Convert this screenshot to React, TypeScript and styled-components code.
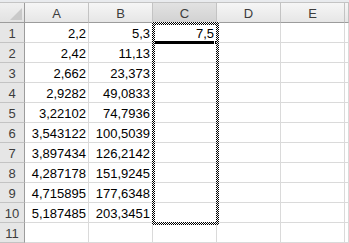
import React from "react";
import styled, { createGlobalStyle } from "styled-components";

const Global = createGlobalStyle`
  html, body { margin: 0; padding: 0; background: #ffffff; }
  body { font-family: "Liberation Sans", Arial, sans-serif; }
`;

const Page = styled.div`
  width: 349px;
  height: 243px;
  overflow: hidden;
  display: flex;
  flex-direction: column;
  background: #ffffff;
`;

const TopStrip = styled.div`
  height: 2px;
  background: #e9ebee;
  border-bottom: 1px solid #c4c4c4;
  flex: none;
`;

const Sheet = styled.div`
  position: relative;
  display: grid;
  grid-template-columns: 25px repeat(5, 64px) 1fr;
  grid-auto-rows: 20px;
  font-size: 13px;
`;

const Corner = styled.div`
  box-sizing: border-box;
  border-right: 1px solid #9c9c9c;
  border-bottom: 1px solid #9c9c9c;
  background: linear-gradient(#f0f0f0, #e2e2e2);
  position: relative;
  &::after {
    content: "";
    position: absolute;
    right: 2px;
    bottom: 2px;
    width: 0;
    height: 0;
    border-left: 12px solid transparent;
    border-bottom: 12px solid #c9c9c9;
  }
`;

const ColHead = styled.div<{ $sel?: boolean }>`
  box-sizing: border-box;
  border-right: 1px solid #c3c3c3;
  border-bottom: 1px solid #9c9c9c;
  background: ${(p) =>
    p.$sel
      ? "linear-gradient(#e2e2e2, #d2d2d2)"
      : "linear-gradient(#f6f6f6, #e6e6e6)"};
  color: #3c3c3c;
  display: flex;
  align-items: center;
  justify-content: center;
  padding-top: 1px;
`;

const RowHead = styled.div`
  box-sizing: border-box;
  border-right: 1px solid #9c9c9c;
  border-bottom: 1px solid #c3c3c3;
  background: #e6e6e6;
  color: #3c3c3c;
  display: flex;
  align-items: center;
  justify-content: center;
  padding-top: 1px;
`;

const Cell = styled.div<{ $active?: boolean }>`
  box-sizing: border-box;
  border-right: 1px solid #dadada;
  border-bottom: 1px solid #dadada;
  background: #ffffff;
  color: #000;
  display: flex;
  align-items: center;
  justify-content: flex-end;
  padding: 1px 2px 0 0;
  white-space: nowrap;
  position: relative;
  ${(p) =>
    p.$active
      ? `
    &::after {
      content: "";
      position: absolute;
      left: 2px;
      right: 1px;
      bottom: -2px;
      height: 3px;
      background: #000;
      z-index: 2;
    }
    &::before {
      content: "";
      position: absolute;
      right: -3px;
      bottom: -3px;
      width: 5px;
      height: 5px;
      background: #000;
      border: 1px solid #fff;
      box-sizing: border-box;
      z-index: 3;
    }
  `
      : ""}
`;

const Ants = styled.div`
  position: absolute;
  left: 152px;
  top: 19px;
  width: 67px;
  height: 203px;
  box-sizing: border-box;
  pointer-events: none;
  padding: 3px;
  background: repeating-conic-gradient(#000 0% 25%, #fff 0% 50%) 0 0 / 2px 2px;
  -webkit-mask: linear-gradient(#000 0 0) content-box, linear-gradient(#000 0 0);
  -webkit-mask-composite: xor;
  mask-composite: exclude;
  z-index: 4;
`;

const cols = ["A", "B", "C", "D", "E", ""];
const data: [string, string, string][] = [
  ["2,2", "5,3", "7,5"],
  ["2,42", "11,13", ""],
  ["2,662", "23,373", ""],
  ["2,9282", "49,0833", ""],
  ["3,22102", "74,7936", ""],
  ["3,543122", "100,5039", ""],
  ["3,897434", "126,2142", ""],
  ["4,287178", "151,9245", ""],
  ["4,715895", "177,6348", ""],
  ["5,187485", "203,3451", ""],
  ["", "", ""],
];

export default function App() {
  return (
    <Page>
      <Global />
      <TopStrip />
      <Sheet>
        <Corner />
        {cols.map((c, i) => (
          <ColHead key={i} $sel={c === "C"}>
            {c}
          </ColHead>
        ))}
        {data.map((row, r) => (
          <React.Fragment key={r}>
            <RowHead>{r + 1}</RowHead>
            <Cell>{row[0]}</Cell>
            <Cell>{row[1]}</Cell>
            <Cell $active={r === 0}>{row[2]}</Cell>
            <Cell />
            <Cell />
            <Cell />
          </React.Fragment>
        ))}
        <Ants />
      </Sheet>
    </Page>
  );
}
